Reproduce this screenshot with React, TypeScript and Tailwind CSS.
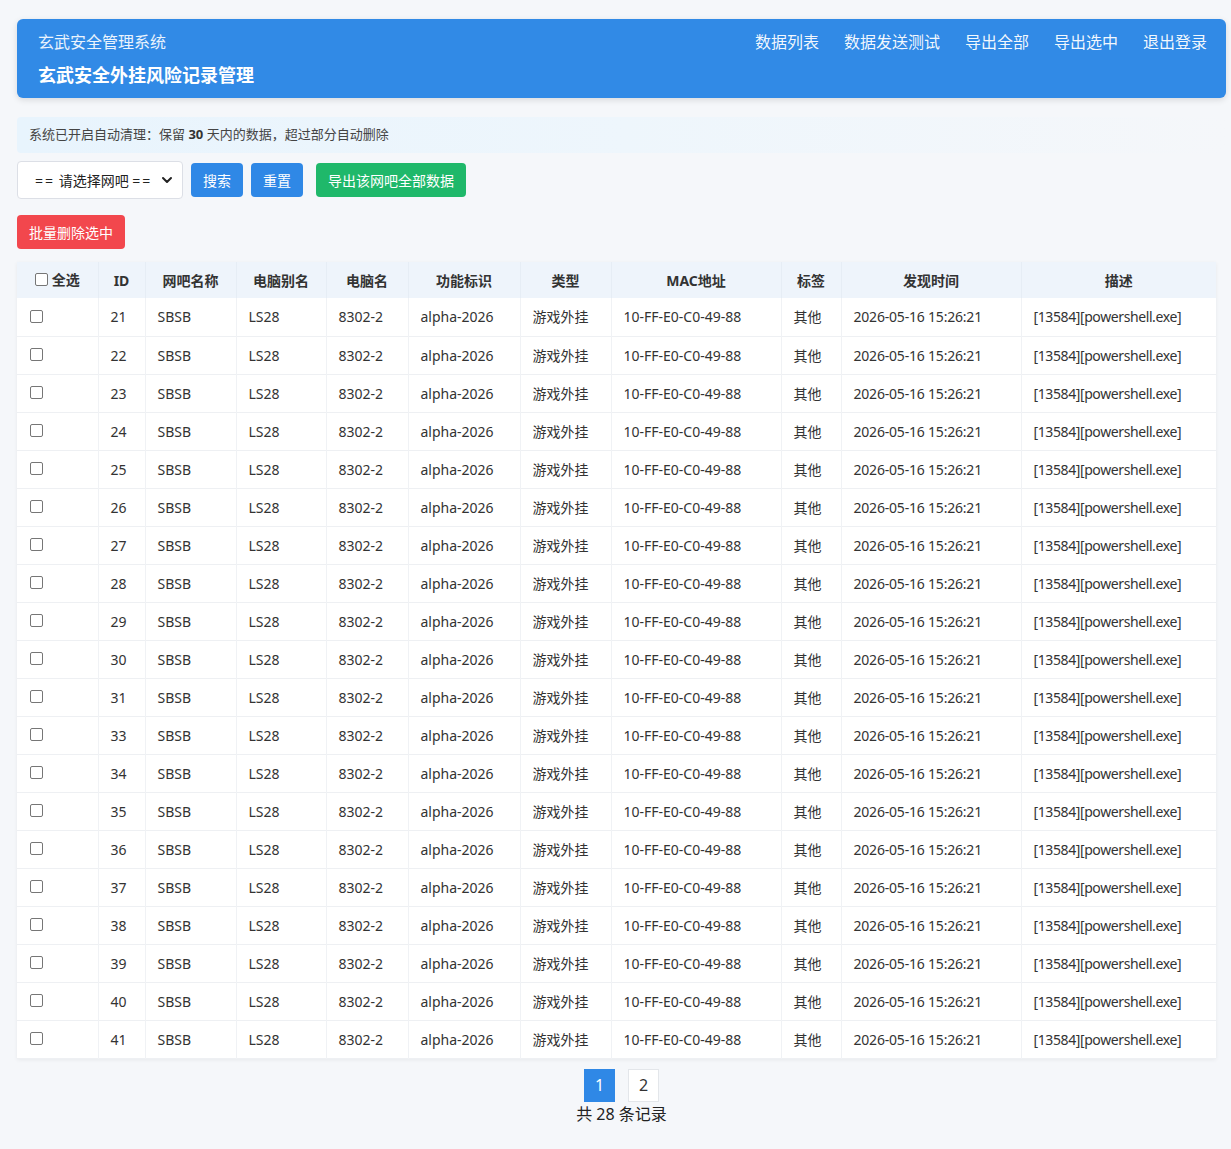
import React from 'react'

const font = "font-['Noto_Sans','Noto_Sans_CJK_SC',sans-serif]"

const ids = [21, 22, 23, 24, 25, 26, 27, 28, 29, 30, 31, 33, 34, 35, 36, 37, 38, 39, 40, 41]

// 列宽按截图量出
const cols = [81, 47, 91, 90, 82, 112, 91, 170, 60, 180, 195]

const heads = ['ID', '网吧名称', '电脑别名', '电脑名', '功能标识', '类型', 'MAC地址', '标签', '发现时间', '描述']

function Checkbox() {
  return (
    <span className="inline-block h-[13px] w-[13px] rounded-[2px] border border-[#767676] bg-white align-middle" />
  )
}

export default function App() {
  const navs = ['数据列表', '数据发送测试', '导出全部', '导出选中', '退出登录']

  return (
    <div className={`${font} min-h-[1149px] bg-[#f5f7fa] pt-[19px] pr-[5px] pl-[17px] text-[#333]`}>
      {/* 顶部 */}
      <header className="flex h-[79px] justify-between rounded-[6px] bg-[#318ae6] pr-[19px] pl-[21px] text-white shadow-[0_2px_6px_rgba(0,0,0,0.12)]">
        <div className="pt-[11px]">
          <div className="text-[16px] leading-[24px] text-white/90">玄武安全管理系统</div>
          <div className="mt-[8px] text-[18px] leading-[26px] font-bold">玄武安全外挂风险记录管理</div>
        </div>
        <nav className="flex gap-[25px] pt-[11px] text-[16px] leading-[24px] text-white/95">
          {navs.map((n) => (
            <span key={n}>{n}</span>
          ))}
        </nav>
      </header>

      {/* 提示 */}
      <div className="mt-[19px] flex h-[36px] items-center rounded-[4px] bg-gradient-to-r from-[#e8f4fd] via-[#eef6fc] to-[#f5f7fa] pl-[12px] text-[13px] text-[#444]">
        系统已开启自动清理：保留&nbsp;<b className="text-[#333]">30</b>&nbsp;天内的数据，超过部分自动删除
      </div>

      {/* 筛选 */}
      <div className="mt-[8px] flex items-center">
        <div className="relative flex h-[38px] w-[166px] items-center rounded-[4px] border border-[#dcdfe6] bg-white pl-[17px] text-[14px] text-[#222]">
          <span className="tracking-[2px]">==</span>&nbsp;请选择网吧&nbsp;<span className="tracking-[2px]">==</span>
          <svg className="absolute right-[9px] h-[12px] w-[12px]" viewBox="0 0 12 12" fill="none">
            <path d="M2 4l4 4 4-4" stroke="#222" strokeWidth="2" strokeLinecap="round" strokeLinejoin="round" />
          </svg>
        </div>
        <button className="ml-[8px] h-[34px] w-[52px] rounded-[4px] bg-[#2f88e6] text-[14px] text-white">搜索</button>
        <button className="ml-[8px] h-[34px] w-[52px] rounded-[4px] bg-[#2f88e6] text-[14px] text-white">重置</button>
        <button className="ml-[13px] h-[34px] w-[150px] rounded-[4px] bg-[#1fb86a] text-[14px] text-white">
          导出该网吧全部数据
        </button>
      </div>

      <button className="mt-[16px] h-[34px] w-[108px] rounded-[4px] bg-[#f2474d] text-[14px] text-white">
        批量删除选中
      </button>

      {/* 表格 */}
      <table className="mt-[13px] w-[1199px] table-fixed border-collapse bg-white text-[14px] shadow-[0_1px_4px_rgba(0,0,0,0.06)]">
        <colgroup>
          {cols.map((w, i) => (
            <col key={i} style={{ width: w }} />
          ))}
        </colgroup>
        <thead>
          <tr className="h-[36px] bg-[#eef4fb] font-bold text-[#333]">
            <th className="border-r border-[#e6edf5] font-bold">
              <span className="inline-flex items-center gap-[4px]">
                <Checkbox />
                全选
              </span>
            </th>
            {heads.map((h) => (
              <th key={h} className="border-r border-[#e6edf5] font-bold last:border-r-0">
                {h}
              </th>
            ))}
          </tr>
        </thead>
        <tbody>
          {ids.map((id) => (
            <tr key={id} className="h-[38px] border-b border-[#eef0f3] text-[#333]">
              <td className="border-r border-[#f0f2f5] pt-[6px] pl-[13px] align-top">
                <Checkbox />
              </td>
              <td className="border-r border-[#f0f2f5] px-[12px]">{id}</td>
              <td className="border-r border-[#f0f2f5] px-[12px]">SBSB</td>
              <td className="border-r border-[#f0f2f5] px-[12px]">LS28</td>
              <td className="border-r border-[#f0f2f5] px-[12px]">8302-2</td>
              <td className="border-r border-[#f0f2f5] px-[12px]">alpha-2026</td>
              <td className="border-r border-[#f0f2f5] px-[12px]">游戏外挂</td>
              <td className="border-r border-[#f0f2f5] px-[12px]">10-FF-E0-C0-49-88</td>
              <td className="border-r border-[#f0f2f5] px-[12px]">其他</td>
              <td className="border-r border-[#f0f2f5] px-[12px] tracking-[-0.2px] whitespace-nowrap">
                2026-05-16 15:26:21
              </td>
              <td className="px-[12px] tracking-[-0.4px] whitespace-nowrap">[13584][powershell.exe]</td>
            </tr>
          ))}
        </tbody>
      </table>

      {/* 分页 */}
      <div className="mt-[10px] flex w-[1209px] flex-col items-center">
        <div className="flex gap-[13px]">
          <span className="flex h-[33px] w-[31px] items-center justify-center bg-[#2f88e6] text-[16px] text-white">1</span>
          <span className="flex h-[33px] w-[31px] items-center justify-center border border-[#e3e6ea] bg-white text-[16px] text-[#333]">
            2
          </span>
        </div>
        <div className="text-[16px] leading-[24px] text-[#222]">共 28 条记录</div>
      </div>
    </div>
  )
}
